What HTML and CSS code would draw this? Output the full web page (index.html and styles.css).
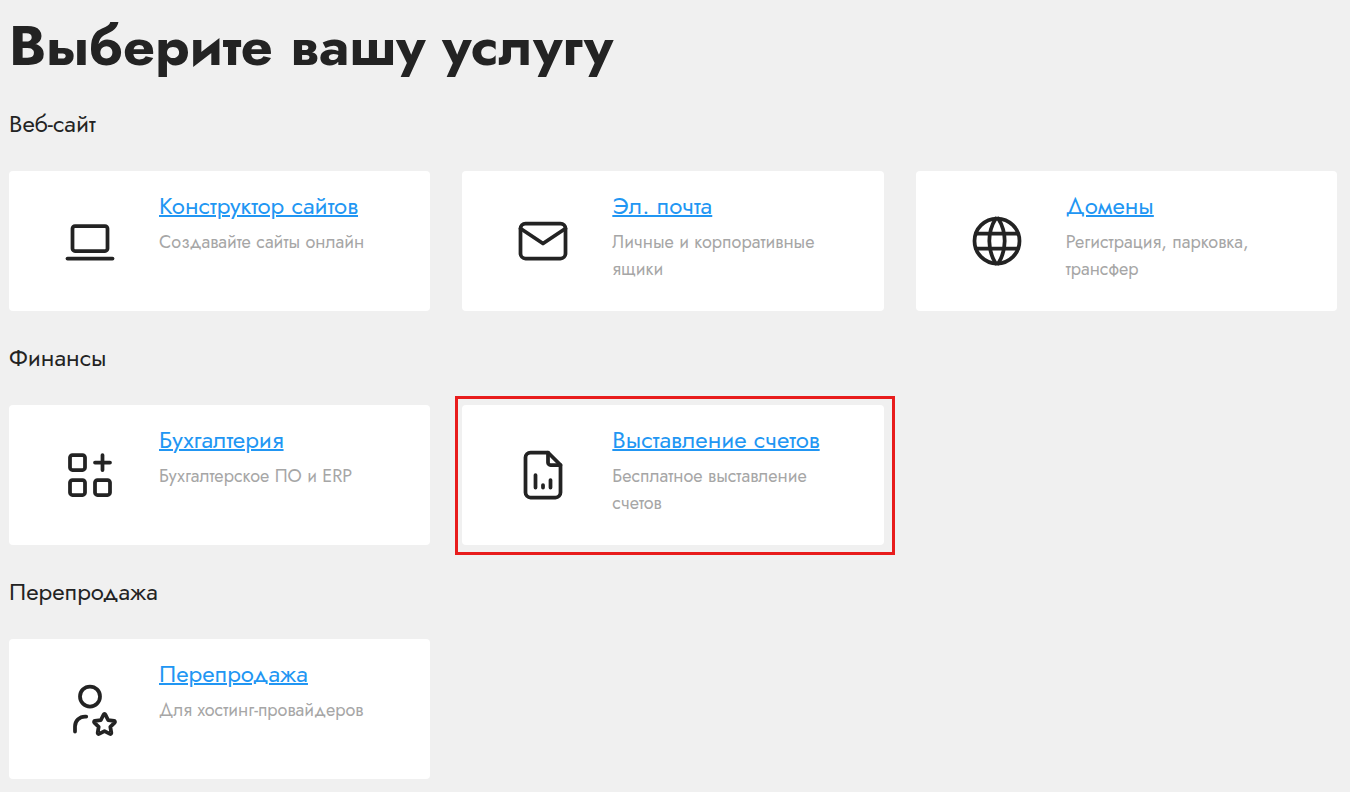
FILE: index.html
```html
<!DOCTYPE html>
<html lang="ru">
<head>
    <meta charset="UTF-8">
    <meta name="viewport" content="width=device-width, initial-scale=1.0">
    <title>Выберите вашу услугу</title>
    <link rel="stylesheet" href="styles.css">
</head>
<body>
    <main class="services">
        <h1>Выберите вашу услугу</h1>

        <section class="group">
            <h2>Веб-сайт</h2>
            <div class="cards">
                <div class="card">
                    <svg class="icon" viewBox="0 0 24 24" aria-hidden="true">
                        <path d="M3 19h18"/>
                        <rect x="5" y="6" width="14" height="10" rx="1"/>
                    </svg>
                    <div class="info">
                        <a href="#">Конструктор сайтов</a>
                        <p>Создавайте сайты онлайн</p>
                    </div>
                </div>
                <div class="card">
                    <svg class="icon" viewBox="0 0 24 24" aria-hidden="true">
                        <rect x="3" y="5" width="18" height="14" rx="2"/>
                        <path d="M3 7l9 6l9 -6"/>
                    </svg>
                    <div class="info">
                        <a href="#">Эл. почта</a>
                        <p>Личные и корпоративные ящики</p>
                    </div>
                </div>
                <div class="card">
                    <svg class="icon" viewBox="0 0 24 24" aria-hidden="true">
                        <circle cx="12" cy="12" r="9"/>
                        <path d="M3.6 9h16.8M3.6 15h16.8M11.5 3a17 17 0 0 0 0 18M12.5 3a17 17 0 0 1 0 18"/>
                    </svg>
                    <div class="info">
                        <a href="#">Домены</a>
                        <p>Регистрация, парковка, трансфер</p>
                    </div>
                </div>
            </div>
        </section>

        <section class="group">
            <h2>Финансы</h2>
            <div class="cards">
                <div class="card">
                    <svg class="icon" viewBox="0 0 24 24" aria-hidden="true">
                        <rect x="4" y="4" width="6" height="6" rx="1"/>
                        <rect x="4" y="14" width="6" height="6" rx="1"/>
                        <rect x="14" y="14" width="6" height="6" rx="1"/>
                        <path d="M14 7h6M17 4v6"/>
                    </svg>
                    <div class="info">
                        <a href="#">Бухгалтерия</a>
                        <p>Бухгалтерское ПО и ERP</p>
                    </div>
                </div>
                <div class="card marked">
                    <svg class="icon" viewBox="0 0 24 24" aria-hidden="true">
                        <path d="M14 3v4a1 1 0 0 0 1 1h4"/>
                        <path d="M17 21h-10a2 2 0 0 1 -2 -2v-14a2 2 0 0 1 2 -2h7l5 5v11a2 2 0 0 1 -2 2z"/>
                        <path d="M9 17v-5M12 17v-1M15 17v-3"/>
                    </svg>
                    <div class="info">
                        <a href="#">Выставление счетов</a>
                        <p>Бесплатное выставление счетов</p>
                    </div>
                </div>
            </div>
        </section>

        <section class="group">
            <h2>Перепродажа</h2>
            <div class="cards">
                <div class="card">
                    <svg class="icon" viewBox="0 0 24 24" aria-hidden="true">
                        <circle cx="12" cy="7" r="4"/>
                        <path d="M6 21v-2a4 4 0 0 1 4 -4h.5"/>
                        <path d="M17.8 20.817l-2.172 1.138a.392 .392 0 0 1 -.568 -.41l.415 -2.411l-1.757 -1.707a.389 .389 0 0 1 .217 -.665l2.428 -.352l1.086 -2.193a.392 .392 0 0 1 .702 0l1.086 2.193l2.428 .352a.39 .39 0 0 1 .217 .665l-1.757 1.707l.414 2.41a.39 .39 0 0 1 -.567 .411l-2.172 -1.138z"/>
                    </svg>
                    <div class="info">
                        <a href="#">Перепродажа</a>
                        <p>Для хостинг-провайдеров</p>
                    </div>
                </div>
            </div>
        </section>
    </main>
</body>
</html>
```
FILE: styles.css
```css
* { margin: 0; padding: 0; box-sizing: border-box; }
body { background: #f0f0f0; color: #232323; font-family: Jost, Lato, "Open Sans", sans-serif; }
.services { padding: 10px 13px 13px 9px; }
h1 { font-size: 56px; line-height: 72px; font-weight: 700; }
h2 { font-size: 24px; line-height: 36px; font-weight: 400; margin-bottom: 29px; }
.group { margin-top: 24px; }
.group + .group { margin-top: 29px; }
.cards { display: grid; grid-template-columns: repeat(3, 1fr); gap: 32px; }
.card { position: relative; display: flex; gap: 39px; min-height: 140px; padding: 17px 48px 17px 51px; background: #fff; border-radius: 4px; }
.icon { flex: none; align-self: center; width: 60px; height: 60px; fill: none; stroke: #232323; stroke-width: 1.5; stroke-linecap: round; stroke-linejoin: round; }
.info a { display: inline-block; color: #2196f3; font-size: 24px; line-height: 36px; white-space: nowrap; text-decoration: underline; text-decoration-thickness: 2px; }
.info p { margin-top: 5px; color: #a6a6a6; font-size: 18px; line-height: 27px; }

/* red frame around the highlighted card */
.marked::after { content: ""; position: absolute; top: -9px; right: -11px; bottom: -10px; left: -7px; border: 3px solid #e81c1c; pointer-events: none; }
```
